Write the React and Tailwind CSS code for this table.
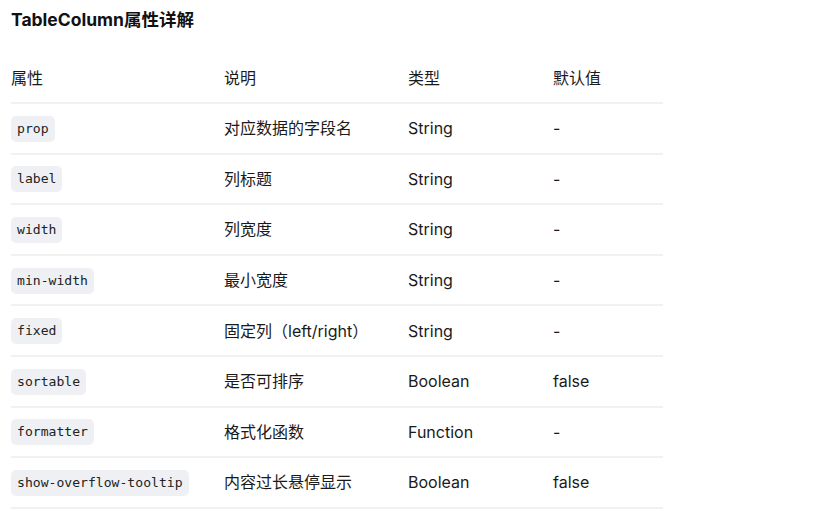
import React from "react";

const rows = [
  ["prop", "对应数据的字段名", "String", "-"],
  ["label", "列标题", "String", "-"],
  ["width", "列宽度", "String", "-"],
  ["min-width", "最小宽度", "String", "-"],
  ["fixed", "固定列（left/right）", "String", "-"],
  ["sortable", "是否可排序", "Boolean", "false"],
  ["formatter", "格式化函数", "Function", "-"],
  ["show-overflow-tooltip", "内容过长悬停显示", "Boolean", "false"],
];

export default function App() {
  return (
    <div
      className="bg-white w-[814px] h-[511px] overflow-hidden text-[#1a1a1a]"
      style={{ fontFamily: 'Inter, "Noto Sans CJK SC", sans-serif' }}
    >
      <div className="pl-[11px] pt-[9px]">
        <h2 className="text-[17.5px] leading-[22px] font-bold text-[#111]">TableColumn属性详解</h2>
        <table className="mt-[22px] w-[652px] border-collapse text-[16px] leading-[24px]">
          <colgroup>
            <col className="w-[213px]" />
            <col className="w-[184px]" />
            <col className="w-[145px]" />
            <col className="w-[110px]" />
          </colgroup>
          <thead>
            <tr className="h-[50px] border-b-2 border-[#f1f1f1]">
              <th className="text-left font-normal p-0">属性</th>
              <th className="text-left font-normal p-0">说明</th>
              <th className="text-left font-normal p-0">类型</th>
              <th className="text-left font-normal p-0">默认值</th>
            </tr>
          </thead>
          <tbody>
            {rows.map((r) => (
              <tr key={r[0]} className="h-[50.6px] border-b-2 border-[#f1f1f1]">
                <td className="p-0">
                  <code
                    className="inline-block bg-[#eef0f3] rounded-[5px] px-[6px] h-[26px] leading-[26px] text-[13.1px] text-[#222]"
                    style={{ fontFamily: '"DejaVu Sans Mono", monospace' }}
                  >
                    {r[0]}
                  </code>
                </td>
                <td className="p-0">{r[1]}</td>
                <td className="p-0">{r[2]}</td>
                <td className="p-0">{r[3]}</td>
              </tr>
            ))}
          </tbody>
        </table>
      </div>
    </div>
  );
}
